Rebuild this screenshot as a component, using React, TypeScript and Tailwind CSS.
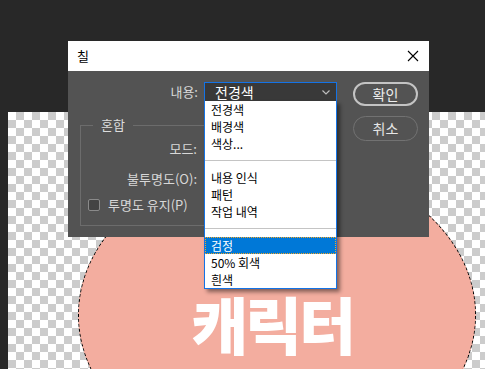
import React from "react";

const font = "font-['Noto_Sans_CJK_KR','Noto_Sans',sans-serif]";

function ListItem({ label, active }: { label: string; active?: boolean }) {
  if (active) {
    return (
      <div className="h-[17px] bg-[#0078d7] text-white pl-[6px] leading-[17px] outline outline-1 outline-dotted outline-[#f5a623] -outline-offset-1">
        {label}
      </div>
    );
  }
  return <div className="h-[17px] pl-[6px] leading-[17px] text-black">{label}</div>;
}

function Separator() {
  return (
    <div className="h-[17px] flex items-center">
      <div className="h-px w-full bg-[#c4c4c4]" />
    </div>
  );
}

export default function App() {
  return (
    <div className={`relative w-[485px] h-[369px] overflow-hidden bg-[#282828] flex flex-col ${font}`}>
      <div className="h-[112px] shrink-0" />
      <div className="flex flex-1">
        <div className="w-[8px] shrink-0" />
        <div className="flex-1 bg-[conic-gradient(#cccccc_25%,#ffffff_0_50%,#cccccc_0_75%,#ffffff_0)] bg-[length:16px_16px]" />
      </div>

      {/* canvas shape */}
      <div className="absolute left-[78px] top-[160px] w-[398px] h-[310px] rounded-[50%] bg-[#f3ad9f] border border-dashed border-black" />
      <div className="absolute left-[191px] top-[292px] text-white font-black text-[62px] leading-none tracking-[-3px]">
        캐릭터
      </div>

      {/* dialog */}
      <div className="absolute left-[68px] top-[41px] w-[361px] flex flex-col">
        <div className="h-[30px] bg-white flex items-center justify-between pl-[9px] pr-[9px]">
          <span className="text-[13px] text-black">칠</span>
          <svg width="12" height="12" viewBox="0 0 12 12" className="mr-[1px]">
            <path d="M1 1 L11 11 M11 1 L1 11" stroke="#000" strokeWidth="1.1" fill="none" />
          </svg>
        </div>
        <div className="h-[166px] bg-[#535353] flex pt-[11px] pl-[12px] pr-[11px] gap-[16px]">
          <div className="w-[257px] flex flex-col">
            <div className="flex items-center justify-end gap-[6px] h-[20px]">
              <span className="text-[13px] text-[#d8d8d8]">내용:</span>
              <div className="relative w-[133px] h-[20px] border border-[#1473e6] bg-[#393939] flex items-center justify-between pl-[10px] pr-[6px]">
                <span className="text-[14px] text-white leading-none">전경색</span>
                <svg width="8" height="5" viewBox="0 0 8 5">
                  <path d="M0.5 0.5 L4 4 L7.5 0.5" stroke="#bdbdbd" strokeWidth="1.2" fill="none" />
                </svg>
                <div className="absolute left-[-1px] top-full w-[133px] bg-white border border-t-0 border-[#1473e6] text-[12px] shadow-[3px_3px_4px_rgba(0,0,0,0.45)] z-10">
                  <ListItem label="전경색" />
                  <ListItem label="배경색" />
                  <ListItem label="색상..." />
                  <Separator />
                  <ListItem label="내용 인식" />
                  <ListItem label="패턴" />
                  <ListItem label="작업 내역" />
                  <Separator />
                  <ListItem label="검정" active />
                  <ListItem label="50% 회색" />
                  <ListItem label="흰색" />
                </div>
              </div>
            </div>
            <fieldset className="mt-[14px] border border-[#6c6c6c] pb-[9px]">
              <legend className="ml-[12px] px-[8px] text-[13px] text-[#dcdcdc] leading-[18px]">혼합</legend>
              <div className="flex items-center h-[22px] mt-[4px]">
                <span className="w-[116px] text-right text-[13px] text-[#d8d8d8]">모드:</span>
                <div className="ml-[8px] w-[120px] h-[20px] border border-[#6a6a6a] bg-[#454545]" />
              </div>
              <div className="flex items-center h-[22px] mt-[8px]">
                <span className="w-[116px] text-right text-[13px] text-[#d8d8d8]">불투명도(O):</span>
                <div className="ml-[8px] w-[60px] h-[20px] border border-[#6a6a6a] bg-[#454545]" />
              </div>
              <div className="flex items-center h-[22px] mt-[4px] pl-[7px] gap-[8px]">
                <div className="w-[12px] h-[12px] rounded-[2px] border border-[#8a8a8a] bg-[#444444]" />
                <span className="text-[13px] text-[#d8d8d8]">투명도 유지(P)</span>
              </div>
            </fieldset>
          </div>
          <div className="w-[65px] flex flex-col gap-[10px]">
            <div className="h-[24px] rounded-full border-2 border-[#c4c4c4] flex items-center justify-center text-[14px] text-[#eeeeee]">
              확인
            </div>
            <div className="h-[25px] rounded-full border-[1.5px] border-[#727272] flex items-center justify-center text-[14px] text-[#e6e6e6]">
              취소
            </div>
          </div>
        </div>
      </div>
    </div>
  );
}
